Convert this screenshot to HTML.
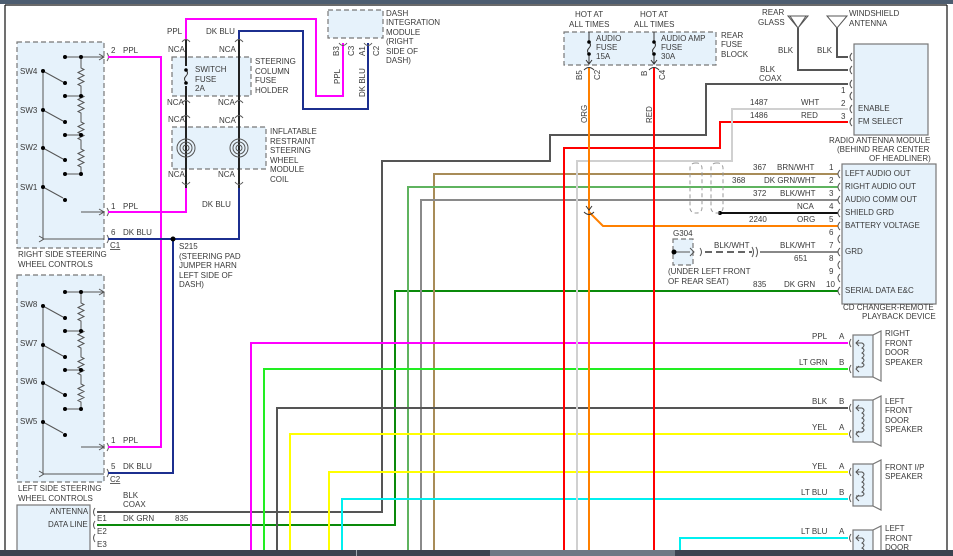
<!DOCTYPE html>
<html><head><meta charset="utf-8"><style>
html,body{margin:0;padding:0;background:#fff;width:953px;height:556px;overflow:hidden}
svg{display:block}
text{font-family:"Liberation Sans",Arial,sans-serif;font-size:8px;fill:#3a3a3a}
.w{fill:none;stroke-width:2}
.t{fill:none;stroke:#555;stroke-width:1}
.box{fill:#e6f2fb;stroke:#777;stroke-width:1.2;stroke-dasharray:5,3}
.sbox{fill:#e6f2fb;stroke:#777;stroke-width:1.2}
</style></head><body>
<svg width="953" height="556" viewBox="0 0 953 556" xmlns="http://www.w3.org/2000/svg">
<rect x="0" y="0" width="953" height="4" fill="#4d5d70"/>
<line x1="5" y1="5" x2="5" y2="550" stroke="#111" stroke-width="1.2"/>
<line x1="5" y1="5" x2="947" y2="5" stroke="#111" stroke-width="1.2"/>
<line x1="947" y1="5" x2="947" y2="550" stroke="#111" stroke-width="1.2"/>

<!-- boxes -->
<rect class="box" x="17" y="42" width="87" height="206"/>
<rect class="box" x="17" y="275" width="87" height="207"/>
<rect class="box" x="172" y="57" width="79" height="39"/>
<rect class="box" x="172" y="127" width="94" height="42"/>
<rect class="box" x="328" y="10" width="55" height="28"/>
<rect class="box" x="564" y="32" width="152" height="33"/>
<rect class="box" x="673" y="239" width="20" height="26"/>
<rect class="sbox" x="854" y="44" width="74" height="91"/>
<rect class="sbox" x="842" y="164" width="94" height="140"/>
<rect class="sbox" x="17" y="505" width="73" height="50"/>

<!-- switch groups -->
<g id="sw" class="t">
<path d="M43,71 V239 H104 M39,236 l5,3 l-5,3" stroke="#555"/>
<path d="M65,57 H81 M81,57 V60 M81,57 H104 M65,96 H81 M65,135 H81 M65,174 H81 M81,212 H104"/>
<path d="M81,60 v8 l3,1.5 l-6,3 l6,3 l-6,3 l6,3 l-6,3 l3,1.5 v9 l3,1.5 l-6,3 l6,3 l-6,3 l6,3 l-6,3 l3,1.5 v9 l3,1.5 l-6,3 l6,3 l-6,3 l6,3 l-6,3 l3,1.5 v9 l3,1.5 l-6,3 l6,3 l-6,3 l6,3 l-6,3 l3,1.5 v9"/>
<path d="M43,71 L63,82 M43,110 L63,121 M43,148 L63,159 M43,187 L63,198"/>
<path d="M99,54 l5,3 l-5,3 M99,209 l5,3 l-5,3"/>
<g fill="#000" stroke="none">
<circle cx="43" cy="71" r="2"/><circle cx="43" cy="110" r="2"/><circle cx="43" cy="148" r="2"/><circle cx="43" cy="187" r="2"/>
<circle cx="65" cy="57" r="2"/><circle cx="81" cy="57" r="2"/><circle cx="65" cy="96" r="2"/><circle cx="81" cy="96" r="2"/>
<circle cx="65" cy="135" r="2"/><circle cx="81" cy="135" r="2"/><circle cx="65" cy="174" r="2"/><circle cx="81" cy="174" r="2"/>
<circle cx="65" cy="83" r="2"/><circle cx="65" cy="122" r="2"/><circle cx="65" cy="160" r="2"/><circle cx="65" cy="200" r="2"/>
</g>
</g>
<use href="#sw" transform="translate(0,235)"/>
<text x="20" y="74">SW4</text><text x="20" y="113">SW3</text><text x="20" y="150">SW2</text><text x="20" y="190">SW1</text>
<text x="20" y="307">SW8</text><text x="20" y="346">SW7</text><text x="20" y="384">SW6</text><text x="20" y="424">SW5</text>

<!-- connectors small -->
<g class="t">
<path d="M107,53 q3,4 0,8 M107,208 q3,4 0,8 M107,235 q3,4 0,8 M107,443 q3,4 0,8 M107,469 q3,4 0,8"/>
</g>

<!-- steering wires -->
<path class="w" stroke="#ff00ff" d="M108,57 H161 V447 H108"/>
<path class="w" stroke="#ff00ff" d="M108,212 H186 V188"/>
<path class="w" stroke="#ff00ff" d="M186,40 V19 H316 V96 H343 V43"/>
<path class="w" stroke="#1c2f8f" d="M108,239 H239 V188"/>
<path class="w" stroke="#1c2f8f" d="M173,239 V473 H108"/>
<path class="w" stroke="#1c2f8f" d="M239,40 V31 H303 V109 H368 V43"/>
<path class="w" stroke="#222" d="M186,40 V188 M239,40 V188"/>
<circle cx="173" cy="239" r="2.5" fill="#000"/>
<g class="t" stroke="#444">
<path d="M182,42 q4,-5 8,0 M235,42 q4,-5 8,0 M182,103 q4,-5 8,0 M235,103 q4,-5 8,0 M182,118 q4,-5 8,0 M235,118 q4,-5 8,0 M182,182 q4,5 8,0 M235,182 q4,5 8,0 M339,43 q4,5 8,0 M364,43 q4,5 8,0"/>
<circle cx="186" cy="148" r="9"/><circle cx="186" cy="148" r="6"/><circle cx="186" cy="148" r="3"/>
<circle cx="239" cy="148" r="9"/><circle cx="239" cy="148" r="6"/><circle cx="239" cy="148" r="3"/>
</g>
<rect x="183" y="66" width="6" height="20" fill="#e6f2fb"/>
<path d="M186,70 q3,3 0,6 q-3,3 0,6" fill="none" stroke="#333"/>
<circle cx="186" cy="70" r="1.8"/><circle cx="186" cy="83" r="1.8"/>

<text x="167" y="34">PPL</text><text x="206" y="34">DK BLU</text>
<text x="168" y="52">NCA</text><text x="219" y="52">NCA</text>
<text x="195" y="72">SWITCH</text><text x="195" y="82">FUSE</text><text x="195" y="91">2A</text>
<text x="255" y="64">STEERING</text><text x="255" y="74">COLUMN</text><text x="255" y="83">FUSE</text><text x="255" y="93">HOLDER</text>
<text x="167" y="105">NCA</text><text x="218" y="105">NCA</text>
<text x="168" y="122">NCA</text><text x="219" y="123">NCA</text>
<text x="270" y="134">INFLATABLE</text><text x="270" y="144">RESTRAINT</text><text x="270" y="153">STEERING</text><text x="270" y="163">WHEEL</text><text x="270" y="172">MODULE</text><text x="270" y="182">COIL</text>
<text x="168" y="177">NCA</text><text x="218" y="177">NCA</text>
<text x="202" y="207">DK BLU</text>
<text x="386" y="16">DASH</text><text x="386" y="25">INTEGRATION</text><text x="386" y="35">MODULE</text><text x="386" y="44">(RIGHT</text><text x="386" y="54">SIDE OF</text><text x="386" y="63">DASH)</text>
<text transform="translate(339,56) rotate(-90)">B3</text><text transform="translate(354,56) rotate(-90)">C3</text>
<text transform="translate(365,56) rotate(-90)">A1</text><text transform="translate(379,56) rotate(-90)">C2</text>
<text transform="translate(340,84) rotate(-90)">PPL</text><text transform="translate(365,97) rotate(-90)">DK BLU</text>
<text x="111" y="53">2</text><text x="123" y="53">PPL</text>
<text x="111" y="209">1</text><text x="123" y="209">PPL</text>
<text x="111" y="235">6</text><text x="123" y="235">DK BLU</text>
<text x="110" y="248" text-decoration="underline">C1</text>
<text x="18" y="257">RIGHT SIDE STEERING</text><text x="18" y="267">WHEEL CONTROLS</text>
<text x="179" y="249">S215</text><text x="179" y="259">(STEERING PAD</text><text x="179" y="268">JUMPER HARN</text><text x="179" y="278">LEFT SIDE OF</text><text x="179" y="287">DASH)</text>
<text x="111" y="443">1</text><text x="123" y="443">PPL</text>
<text x="111" y="469">5</text><text x="123" y="469">DK BLU</text>
<text x="110" y="482" text-decoration="underline">C2</text>
<text x="18" y="491">LEFT SIDE STEERING</text><text x="18" y="501">WHEEL CONTROLS</text>
<text x="50" y="514">ANTENNA</text><text x="48" y="527">DATA LINE</text>
<text x="97" y="521">E1</text><text x="97" y="534">E2</text><text x="97" y="547">E3</text>
<text x="123" y="498">BLK</text><text x="123" y="507">COAX</text>
<text x="123" y="521">DK GRN</text><text x="175" y="521">835</text>
<g class="t"><path d="M95,508 q-3,4 0,8 M95,521 q-3,4 0,8 M95,534 q-3,4 0,8"/></g>

<!-- long harness wires -->
<path class="w" stroke="#555" d="M97,512 H382 V161 H550 V135 H706 V84 H848"/>
<path class="w" stroke="#0a8a0a" d="M97,525 H395 V291 H838"/>
<path class="w" stroke="#a88c58" d="M434,552 V174 H838"/>
<path class="w" stroke="#5fb35f" d="M408,552 V187 H838"/>
<path class="w" stroke="#8a8a8a" d="M421,552 V200 H838"/>
<path class="w" stroke="#ff00ff" d="M251,552 V343 H848"/>
<path class="w" stroke="#22ee22" d="M264,552 V369 H848"/>
<path class="w" stroke="#555" d="M277,552 V408 H848"/>
<path class="w" stroke="#ffff00" d="M290,552 V434 H848"/>
<path class="w" stroke="#ffff00" d="M329,552 V472 H848"/>
<path class="w" stroke="#00f0f0" d="M342,552 V499 H848"/>
<path class="w" stroke="#00f0f0" d="M680,552 V538 H848"/>
<path class="w" stroke="#ff0000" d="M564,552 V148 H720 V122 H848"/>
<path class="w" stroke="#d0d0d0" d="M577,552 V161 H732 V109 H848"/>
<path class="w" stroke="#ff8000" d="M589,68 V552 M589,212 L603,226 H838"/>
<path class="w" stroke="#ff0000" d="M654,68 V552"/>
<path class="w" stroke="#111" d="M720,213 H838"/>
<circle cx="720" cy="213" r="2" fill="#000"/>
<path d="M705,252 H752" stroke="#666" stroke-width="2" stroke-dasharray="7,4"/>
<path class="w" stroke="#888" d="M760,252 H838"/>
<path d="M673,252 H690" stroke="#555"/><circle cx="674" cy="252" r="2.5"/>
<path d="M690,248 l4,4 l-4,4 M700,248 q3,4 0,8 M752,247 q3,5 0,10 M756,247 q3,5 0,10" fill="none" stroke="#555"/>
<rect x="690" y="163" width="12" height="50" rx="5" fill="none" stroke="#999" stroke-dasharray="4,3"/>
<rect x="711" y="163" width="12" height="50" rx="5" fill="none" stroke="#999" stroke-dasharray="4,3"/>

<!-- antennas -->
<path d="M788,16 H808 L798,28 Z M790,16 L798,28 L806,16" fill="none" stroke="#555"/>
<path d="M827,16 H847 L837,28 Z" fill="none" stroke="#555"/>
<path class="w" stroke="#555" d="M798,28 V70 H848 M837,28 V57 H848"/>

<!-- fuse block -->
<g fill="none" stroke="#333"><path d="M589,32 V42 q3,3 0,6 q-3,3 0,6 V64 M586,60 l3,4 l3,-4 M654,32 V42 q3,3 0,6 q-3,3 0,6 V64 M651,60 l3,4 l3,-4"/>
<path d="M584,70 q5,-5 10,0 M649,70 q5,-5 10,0 M584,212 q5,5 10,0 M586,206 l3,4 l3,-4"/></g>
<circle cx="589" cy="42" r="1.8"/><circle cx="589" cy="54" r="1.8"/><circle cx="654" cy="42" r="1.8"/><circle cx="654" cy="54" r="1.8"/>
<text x="575" y="17">HOT AT</text><text x="569" y="27">ALL TIMES</text>
<text x="640" y="17">HOT AT</text><text x="634" y="27">ALL TIMES</text>
<text x="596" y="41">AUDIO</text><text x="596" y="50">FUSE</text><text x="596" y="59">15A</text>
<text x="661" y="41">AUDIO AMP</text><text x="661" y="50">FUSE</text><text x="661" y="59">30A</text>
<text x="721" y="38">REAR</text><text x="721" y="47">FUSE</text><text x="721" y="57">BLOCK</text>
<text transform="translate(582,80) rotate(-90)">B5</text><text transform="translate(600,80) rotate(-90)">C2</text>
<text transform="translate(647,76) rotate(-90)">B</text><text transform="translate(665,80) rotate(-90)">C4</text>
<text transform="translate(587,123) rotate(-90)">ORG</text><text transform="translate(652,123) rotate(-90)">RED</text>

<text x="762" y="15">REAR</text><text x="758" y="25">GLASS</text>
<text x="849" y="16">WINDSHIELD</text><text x="849" y="26">ANTENNA</text>
<text x="778" y="53">BLK</text><text x="817" y="53">BLK</text>
<text x="760" y="72">BLK</text><text x="759" y="81">COAX</text>
<text x="841" y="93">1</text><text x="841" y="106">2</text><text x="841" y="119">3</text>
<text x="750" y="105">1487</text><text x="801" y="105">WHT</text>
<text x="750" y="118">1486</text><text x="801" y="118">RED</text>
<text x="858" y="111">ENABLE</text><text x="858" y="124">FM SELECT</text>
<text x="829" y="143">RADIO ANTENNA MODULE</text><text x="837" y="152">(BEHIND REAR CENTER</text><text x="869" y="161">OF HEADLINER)</text>
<g class="t"><path d="M852,53 q-4,4 0,8 M852,66 q-4,4 0,8 M852,80 q-4,4 0,8 M852,92 q-4,4 0,8 M852,105 q-4,4 0,8 M852,118 q-4,4 0,8"/>
<path d="M840,170 q-4,4 0,8 M840,183 q-4,4 0,8 M840,196 q-4,4 0,8 M840,209 q-4,4 0,8 M840,222 q-4,4 0,8 M840,235 q-4,4 0,8 M840,248 q-4,4 0,8 M840,261 q-4,4 0,8 M840,274 q-4,4 0,8 M840,287 q-4,4 0,8"/></g>

<text x="753" y="170">367</text><text x="777" y="170">BRN/WHT</text><text x="829" y="170">1</text>
<text x="732" y="183">368</text><text x="764" y="183">DK GRN/WHT</text><text x="829" y="183">2</text>
<text x="753" y="196">372</text><text x="780" y="196">BLK/WHT</text><text x="829" y="196">3</text>
<text x="797" y="209">NCA</text><text x="829" y="209">4</text>
<text x="749" y="222">2240</text><text x="797" y="222">ORG</text><text x="829" y="222">5</text>
<text x="829" y="235">6</text>
<text x="780" y="248">BLK/WHT</text><text x="829" y="248">7</text>
<text x="714" y="248">BLK/WHT</text>
<text x="794" y="261">651</text><text x="829" y="261">8</text>
<text x="829" y="274">9</text>
<text x="753" y="287">835</text><text x="784" y="287">DK GRN</text><text x="826" y="287">10</text>
<text x="673" y="236">G304</text>
<text x="668" y="274">(UNDER LEFT FRONT</text><text x="668" y="284">OF REAR SEAT)</text>
<text x="845" y="176">LEFT AUDIO OUT</text><text x="845" y="189">RIGHT AUDIO OUT</text><text x="845" y="202">AUDIO COMM OUT</text>
<text x="845" y="215">SHIELD GRD</text><text x="845" y="228">BATTERY VOLTAGE</text><text x="845" y="254">GRD</text>
<text x="845" y="293">SERIAL DATA E&amp;C</text>
<text x="843" y="310">CD CHANGER-REMOTE</text><text x="862" y="319">PLAYBACK DEVICE</text>

<!-- speakers -->
<g id="spk">
<rect x="853" y="335" width="20" height="42" fill="#e6f2fb" stroke="#777" stroke-width="1.2"/>
<path d="M873,335 L881,331 V381 L873,377" fill="none" stroke="#777" stroke-width="1.2"/>
<path d="M856,343 H862 q4,2 0,5 q4,2 0,5 q4,2 0,5 q4,2 0,5 q4,2 0,4 H856 M851,339 q-3,4 0,8 M851,365 q-3,4 0,8 M859,340 l-3,3 l3,3 M859,366 l-3,3 l3,3" fill="none" stroke="#555"/>
</g>
<use href="#spk" transform="translate(0,65)"/>
<use href="#spk" transform="translate(0,129)"/>
<use href="#spk" transform="translate(0,195)"/>
<text x="812" y="339">PPL</text><text x="839" y="339">A</text>
<text x="799" y="365">LT GRN</text><text x="839" y="365">B</text>
<text x="812" y="404">BLK</text><text x="839" y="404">B</text>
<text x="812" y="430">YEL</text><text x="839" y="430">A</text>
<text x="812" y="469">YEL</text><text x="839" y="469">A</text>
<text x="801" y="495">LT BLU</text><text x="839" y="495">B</text>
<text x="801" y="534">LT BLU</text><text x="839" y="534">A</text>
<text x="885" y="336">RIGHT</text><text x="885" y="346">FRONT</text><text x="885" y="355">DOOR</text><text x="885" y="365">SPEAKER</text>
<text x="885" y="404">LEFT</text><text x="885" y="413">FRONT</text><text x="885" y="423">DOOR</text><text x="885" y="432">SPEAKER</text>
<text x="885" y="470">FRONT I/P</text><text x="885" y="479">SPEAKER</text>
<text x="885" y="531">LEFT</text><text x="885" y="541">FRONT</text><text x="885" y="550">DOOR</text>

<!-- bottom bar -->
<rect x="0" y="550" width="953" height="6" fill="#3b4350"/>
<rect x="356" y="550" width="1" height="6" fill="#a0a8b0"/>
<rect x="490" y="550" width="185" height="6" fill="#6d7984"/>
</svg>
</body></html>
